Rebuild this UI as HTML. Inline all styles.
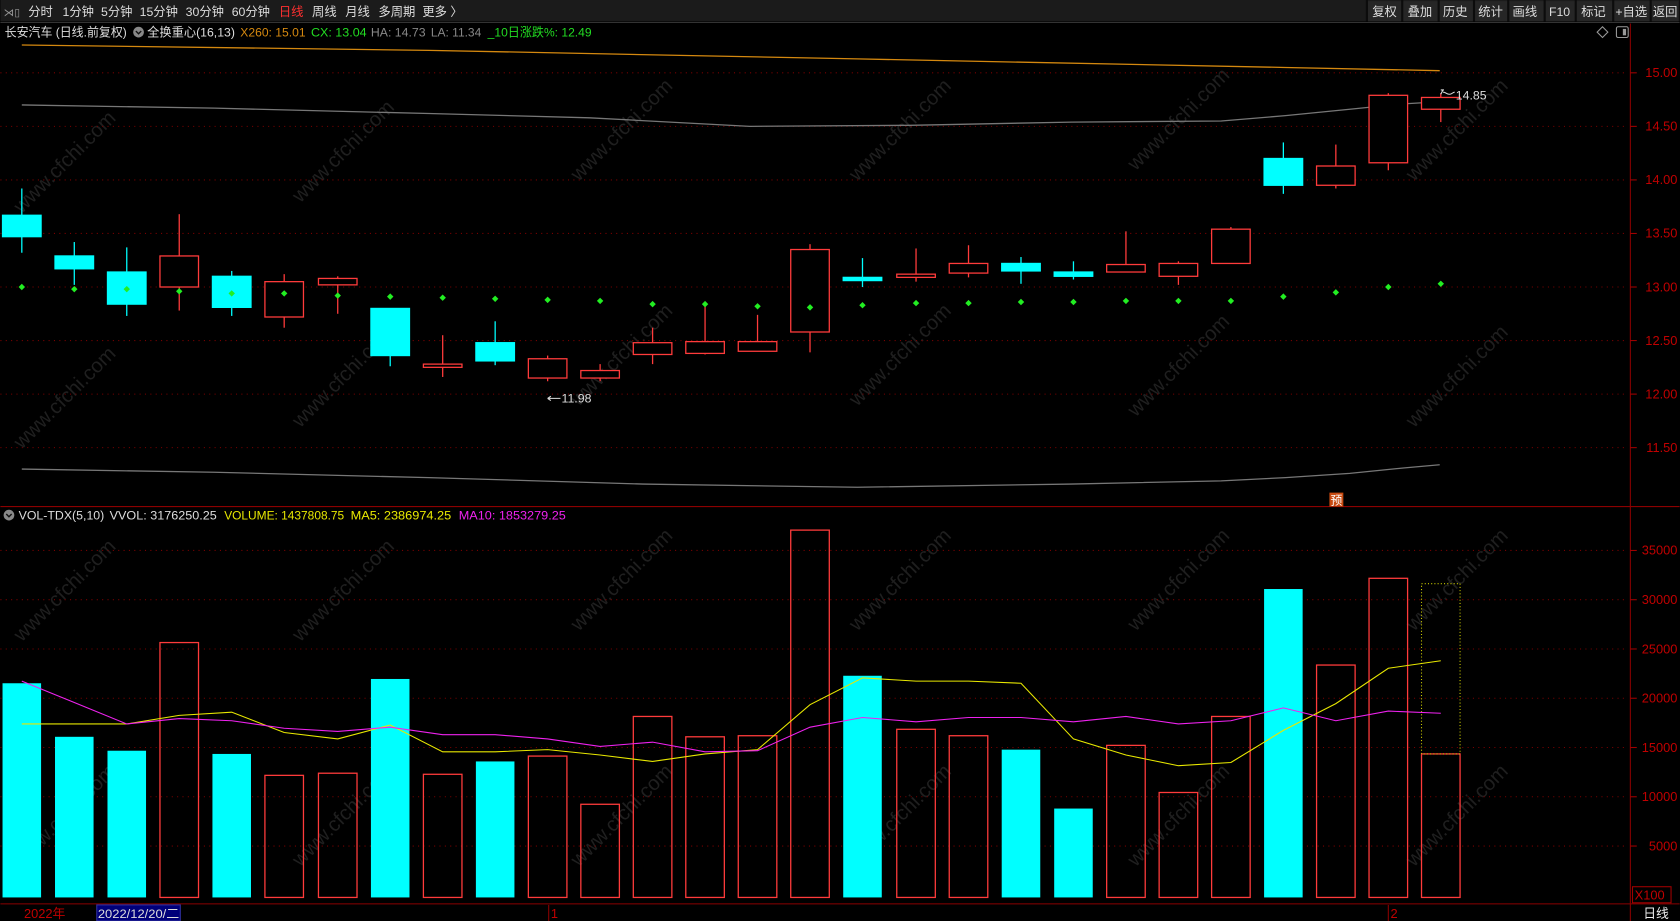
<!DOCTYPE html>
<html><head><meta charset="utf-8"><style>
html,body{margin:0;padding:0;background:#000;overflow:hidden}
svg{display:block}
text{font-family:"Liberation Sans","Noto Sans CJK SC",sans-serif}
</style></head><body>
<svg width="1680" height="921" viewBox="0 0 1568 860" xmlns="http://www.w3.org/2000/svg">
<rect width="1568" height="860" fill="#000"/>
<!-- watermarks -->
<g fill="#1f1f1f" font-size="19" font-family="Liberation Sans,sans-serif">
<text transform="translate(20,200) rotate(-45)">www.cfchi.com</text>
<text transform="translate(280,190) rotate(-45)">www.cfchi.com</text>
<text transform="translate(540,170) rotate(-45)">www.cfchi.com</text>
<text transform="translate(800,170) rotate(-45)">www.cfchi.com</text>
<text transform="translate(1060,160) rotate(-45)">www.cfchi.com</text>
<text transform="translate(1320,170) rotate(-45)">www.cfchi.com</text>
<text transform="translate(20,420) rotate(-45)">www.cfchi.com</text>
<text transform="translate(280,400) rotate(-45)">www.cfchi.com</text>
<text transform="translate(540,380) rotate(-45)">www.cfchi.com</text>
<text transform="translate(800,380) rotate(-45)">www.cfchi.com</text>
<text transform="translate(1060,390) rotate(-45)">www.cfchi.com</text>
<text transform="translate(1320,400) rotate(-45)">www.cfchi.com</text>
<text transform="translate(20,600) rotate(-45)">www.cfchi.com</text>
<text transform="translate(280,600) rotate(-45)">www.cfchi.com</text>
<text transform="translate(540,590) rotate(-45)">www.cfchi.com</text>
<text transform="translate(800,590) rotate(-45)">www.cfchi.com</text>
<text transform="translate(1060,590) rotate(-45)">www.cfchi.com</text>
<text transform="translate(1320,590) rotate(-45)">www.cfchi.com</text>
<text transform="translate(20,810) rotate(-45)">www.cfchi.com</text>
<text transform="translate(280,810) rotate(-45)">www.cfchi.com</text>
<text transform="translate(540,810) rotate(-45)">www.cfchi.com</text>
<text transform="translate(800,810) rotate(-45)">www.cfchi.com</text>
<text transform="translate(1060,810) rotate(-45)">www.cfchi.com</text>
<text transform="translate(1320,810) rotate(-45)">www.cfchi.com</text>
</g>
<!-- top bar -->
<rect x="0" y="0" width="1568" height="20" fill="#1b1b1b"/>
<g font-size="11.5" fill="#ddd">
<text x="3" y="15" fill="#999" font-size="10">⋊▯</text>
<text x="26" y="15">分时</text><text x="58" y="15">1分钟</text><text x="94" y="15">5分钟</text>
<text x="130" y="15">15分钟</text><text x="173" y="15">30分钟</text><text x="216" y="15">60分钟</text>
<text x="260" y="15" fill="#ff3030">日线</text><text x="291" y="15">周线</text><text x="322" y="15">月线</text>
<text x="353" y="15">多周期</text><text x="394" y="15">更多 〉</text>
</g>
<g font-size="11.5" fill="#ddd">
<rect x="1277" y="1" width="290" height="19" fill="#262626"/>
<g stroke="#0c0c0c" stroke-width="2"><line x1="1276" y1="0" x2="1276" y2="20"/><line x1="1309" y1="0" x2="1309" y2="20"/><line x1="1343" y1="0" x2="1343" y2="20"/><line x1="1376" y1="0" x2="1376" y2="20"/><line x1="1408" y1="0" x2="1408" y2="20"/><line x1="1442" y1="0" x2="1442" y2="20"/><line x1="1471" y1="0" x2="1471" y2="20"/><line x1="1506" y1="0" x2="1506" y2="20"/><line x1="1541" y1="0" x2="1541" y2="20"/></g>
<text x="1281" y="15">复权</text><text x="1314" y="15">叠加</text><text x="1347" y="15">历史</text><text x="1380" y="15">统计</text><text x="1412" y="15">画线</text><text x="1446" y="15">F10</text><text x="1476" y="15">标记</text><text x="1508" y="15">+自选</text><text x="1543" y="15">返回</text>
</g>
<line x1="0" y1="21" x2="1568" y2="21" stroke="#333"/>
<!-- info line -->
<g font-size="11.5">
<text x="4" y="34" fill="#ddd" textLength="114" lengthAdjust="spacingAndGlyphs">长安汽车 (日线.前复权)</text>
<circle cx="129" cy="30" r="5" fill="#888"/><path d="M126.5 29l2.5 2.5 2.5-2.5" stroke="#111" stroke-width="1.3" fill="none"/>
<text x="137" y="34" fill="#ddd" textLength="82" lengthAdjust="spacingAndGlyphs">全换重心(16,13)</text>
<text x="224" y="34" fill="#d4880f" textLength="61" lengthAdjust="spacingAndGlyphs">X260: 15.01</text>
<text x="290" y="34" fill="#22dd22" textLength="52" lengthAdjust="spacingAndGlyphs">CX: 13.04</text>
<text x="346" y="34" fill="#888" textLength="51" lengthAdjust="spacingAndGlyphs">HA: 14.73</text>
<text x="402" y="34" fill="#888" textLength="47" lengthAdjust="spacingAndGlyphs">LA: 11.34</text>
<text x="455" y="34" fill="#22dd22" textLength="97" lengthAdjust="spacingAndGlyphs">_10日涨跌%: 12.49</text>
</g>
<path d="M1496 25l5 5-5 5-5-5z" stroke="#999" fill="none"/>
<rect x="1509" y="25" width="11" height="10" rx="1.5" stroke="#999" fill="none"/><rect x="1515" y="27" width="3" height="6" fill="#999"/>
<!-- axes -->
<line x1="1522" y1="22" x2="1522" y2="860" stroke="#8b0000"/>
<line x1="0" y1="473" x2="1568" y2="473" stroke="#8b0000"/>
<line x1="0" y1="844" x2="1568" y2="844" stroke="#8b0000"/>
<!-- price grid -->
<g stroke="#7a0000" stroke-dasharray="1 4">
<line x1="0" y1="68" x2="1520" y2="68"/><line x1="0" y1="118" x2="1520" y2="118"/><line x1="0" y1="168" x2="1520" y2="168"/><line x1="0" y1="218" x2="1520" y2="218"/><line x1="0" y1="268" x2="1520" y2="268"/><line x1="0" y1="318" x2="1520" y2="318"/><line x1="0" y1="368" x2="1520" y2="368"/><line x1="0" y1="418" x2="1520" y2="418"/>
<line x1="0" y1="514" x2="1520" y2="514"/><line x1="0" y1="560" x2="1520" y2="560"/><line x1="0" y1="606" x2="1520" y2="606"/><line x1="0" y1="652" x2="1520" y2="652"/><line x1="0" y1="698" x2="1520" y2="698"/><line x1="0" y1="744" x2="1520" y2="744"/><line x1="0" y1="790" x2="1520" y2="790"/>
</g>
<g stroke="#a00000">
<line x1="1522" y1="68" x2="1528" y2="68"/><line x1="1522" y1="118" x2="1528" y2="118"/><line x1="1522" y1="168" x2="1528" y2="168"/><line x1="1522" y1="218" x2="1528" y2="218"/><line x1="1522" y1="268" x2="1528" y2="268"/><line x1="1522" y1="318" x2="1528" y2="318"/><line x1="1522" y1="368" x2="1528" y2="368"/><line x1="1522" y1="418" x2="1528" y2="418"/>
<line x1="1522" y1="514" x2="1528" y2="514"/><line x1="1522" y1="560" x2="1528" y2="560"/><line x1="1522" y1="606" x2="1528" y2="606"/><line x1="1522" y1="652" x2="1528" y2="652"/><line x1="1522" y1="698" x2="1528" y2="698"/><line x1="1522" y1="744" x2="1528" y2="744"/><line x1="1522" y1="790" x2="1528" y2="790"/>
</g>
<g font-size="12" fill="#c00000" text-anchor="end">
<text x="1566" y="72">15.00</text><text x="1566" y="122">14.50</text><text x="1566" y="172">14.00</text><text x="1566" y="222">13.50</text><text x="1566" y="272">13.00</text><text x="1566" y="322">12.50</text><text x="1566" y="372">12.00</text><text x="1566" y="422">11.50</text>
<text x="1566" y="518">35000</text><text x="1566" y="564">30000</text><text x="1566" y="610">25000</text><text x="1566" y="656">20000</text><text x="1566" y="702">15000</text><text x="1566" y="748">10000</text><text x="1566" y="794">5000</text>
</g>
<!-- lines -->
<polyline fill="none" stroke="#d4880f" stroke-width="1.2" points="20,42 400,47 800,55 1200,63 1344,66"/>
<polyline fill="none" stroke="#777" stroke-width="1.2" points="20,98 200,101 400,106 550,110 700,118 850,117 1000,114 1140,113 1200,108 1260,102 1310,97 1344,95"/>
<polyline fill="none" stroke="#777" stroke-width="1.2" points="20,438 200,441 400,446 600,452 800,455 1000,452 1140,449 1200,446 1260,442 1310,437 1344,434"/>
<!-- candles -->
<g stroke-width="1.2">
<g stroke="#00ffff" fill="#00ffff">
<line x1="20" y1="176" x2="20" y2="236"/><rect x="2" y="201" width="36" height="20"/>
<line x1="69" y1="226" x2="69" y2="266"/><rect x="51" y="239" width="36" height="12"/>
<line x1="118" y1="231" x2="118" y2="295"/><rect x="100" y="254" width="36" height="30"/>
<line x1="216" y1="253" x2="216" y2="295"/><rect x="198" y="258" width="36" height="29"/>
<line x1="364" y1="288" x2="364" y2="342"/><rect x="346" y="288" width="36" height="44"/>
<line x1="462" y1="300" x2="462" y2="341"/><rect x="444" y="320" width="36" height="17"/>
<line x1="805" y1="241" x2="805" y2="268"/><rect x="787" y="259" width="36" height="3"/>
<line x1="953" y1="240" x2="953" y2="265"/><rect x="935" y="246" width="36" height="7"/>
<line x1="1002" y1="244" x2="1002" y2="261"/><rect x="984" y="254" width="36" height="4"/>
<line x1="1198" y1="133" x2="1198" y2="181"/><rect x="1180" y="148" width="36" height="25"/>
</g>
<g stroke="#ff3b3b" fill="#000">
<line x1="167" y1="200" x2="167" y2="290"/><rect x="149" y="239" width="36" height="29"/>
<line x1="265" y1="256" x2="265" y2="306"/><rect x="247" y="263" width="36" height="33"/>
<line x1="315" y1="258" x2="315" y2="293"/><rect x="297" y="260" width="36" height="6"/>
<line x1="413" y1="313" x2="413" y2="352"/><rect x="395" y="340" width="36" height="3"/>
<line x1="511" y1="332" x2="511" y2="356"/><rect x="493" y="335" width="36" height="18"/>
<line x1="560" y1="340" x2="560" y2="356"/><rect x="542" y="346" width="36" height="7"/>
<line x1="609" y1="306" x2="609" y2="340"/><rect x="591" y="320" width="36" height="11"/>
<line x1="658" y1="284" x2="658" y2="331"/><rect x="640" y="319" width="36" height="11"/>
<line x1="707" y1="294" x2="707" y2="328"/><rect x="689" y="319" width="36" height="9"/>
<line x1="756" y1="228" x2="756" y2="329"/><rect x="738" y="233" width="36" height="77"/>
<line x1="855" y1="232" x2="855" y2="263"/><rect x="837" y="256" width="36" height="3"/>
<line x1="904" y1="229" x2="904" y2="259"/><rect x="886" y="246" width="36" height="9"/>
<line x1="1051" y1="216" x2="1051" y2="254"/><rect x="1033" y="247" width="36" height="7"/>
<line x1="1100" y1="244" x2="1100" y2="266"/><rect x="1082" y="246" width="36" height="12"/>
<line x1="1149" y1="212" x2="1149" y2="246"/><rect x="1131" y="214" width="36" height="32"/>
<line x1="1247" y1="135" x2="1247" y2="176"/><rect x="1229" y="155" width="36" height="18"/>
<line x1="1296" y1="87" x2="1296" y2="159"/><rect x="1278" y="89" width="36" height="63"/>
<line x1="1345" y1="87" x2="1345" y2="114"/><rect x="1327" y="91" width="36" height="11"/>
</g>
</g>
<!-- green dots -->
<g fill="#22ee22">
<path d="M20 265l3 3-3 3-3-3z"/><path d="M69 267l3 3-3 3-3-3z"/><path d="M118 267l3 3-3 3-3-3z"/><path d="M167 269l3 3-3 3-3-3z"/><path d="M216 271l3 3-3 3-3-3z"/><path d="M265 271l3 3-3 3-3-3z"/><path d="M315 273l3 3-3 3-3-3z"/><path d="M364 274l3 3-3 3-3-3z"/><path d="M413 275l3 3-3 3-3-3z"/><path d="M462 276l3 3-3 3-3-3z"/><path d="M511 277l3 3-3 3-3-3z"/><path d="M560 278l3 3-3 3-3-3z"/><path d="M609 281l3 3-3 3-3-3z"/><path d="M658 281l3 3-3 3-3-3z"/><path d="M707 283l3 3-3 3-3-3z"/><path d="M756 284l3 3-3 3-3-3z"/><path d="M805 282l3 3-3 3-3-3z"/><path d="M855 280l3 3-3 3-3-3z"/><path d="M904 280l3 3-3 3-3-3z"/><path d="M953 279l3 3-3 3-3-3z"/><path d="M1002 279l3 3-3 3-3-3z"/><path d="M1051 278l3 3-3 3-3-3z"/><path d="M1100 278l3 3-3 3-3-3z"/><path d="M1149 278l3 3-3 3-3-3z"/><path d="M1198 274l3 3-3 3-3-3z"/><path d="M1247 270l3 3-3 3-3-3z"/><path d="M1296 265l3 3-3 3-3-3z"/><path d="M1345 262l3 3-3 3-3-3z"/>
</g>
<g stroke="#ddd" fill="none"><path d="M511 372h12M511 372l3-2M511 372l3 2"/></g>
<text x="524" y="376" font-size="11.5" fill="#ddd">11.98</text>
<path d="M1345 88l2-4M1345 84h3M1347 86c3 0 3 2 6 2s3-2 5-2" stroke="#ddd" fill="none"/>
<text x="1359" y="93" font-size="11.5" fill="#ddd">14.85</text>
<rect x="1241" y="460" width="13" height="13" fill="#c84a10"/><text x="1242" y="471" font-size="11" fill="#fff">预</text>
<!-- VOL header -->
<g font-size="11.5">
<circle cx="8" cy="481" r="5" fill="#888"/><path d="M5.5 480l2.5 2.5 2.5-2.5" stroke="#111" stroke-width="1.3" fill="none"/>
<text x="17" y="485" fill="#ddd" textLength="80" lengthAdjust="spacingAndGlyphs">VOL-TDX(5,10)</text>
<text x="102" y="485" fill="#ddd" textLength="100" lengthAdjust="spacingAndGlyphs">VVOL: 3176250.25</text>
<text x="209" y="485" fill="#e8e800" textLength="112" lengthAdjust="spacingAndGlyphs">VOLUME: 1437808.75</text>
<text x="327" y="485" fill="#e8e800" textLength="94" lengthAdjust="spacingAndGlyphs">MA5: 2386974.25</text>
<text x="428" y="485" fill="#ee22ee" textLength="100" lengthAdjust="spacingAndGlyphs">MA10: 1853279.25</text>
</g>
<!-- volume bars -->
<g fill="#00ffff">
<rect x="2" y="638" width="36" height="200"/><rect x="51" y="688" width="36" height="150"/><rect x="100" y="701" width="36" height="137"/><rect x="198" y="704" width="36" height="134"/><rect x="346" y="634" width="36" height="204"/><rect x="444" y="711" width="36" height="127"/><rect x="787" y="631" width="36" height="207"/><rect x="935" y="700" width="36" height="138"/><rect x="984" y="755" width="36" height="83"/><rect x="1180" y="550" width="36" height="288"/>
</g>
<g fill="none" stroke="#ff3b3b" stroke-width="1.2">
<rect x="149" y="600" width="36" height="238"/><rect x="247" y="724" width="36" height="114"/><rect x="297" y="722" width="36" height="116"/><rect x="395" y="723" width="36" height="115"/><rect x="493" y="706" width="36" height="132"/><rect x="542" y="751" width="36" height="87"/><rect x="591" y="669" width="36" height="169"/><rect x="640" y="688" width="36" height="150"/><rect x="689" y="687" width="36" height="151"/><rect x="738" y="495" width="36" height="343"/><rect x="837" y="681" width="36" height="157"/><rect x="886" y="687" width="36" height="151"/><rect x="1033" y="696" width="36" height="142"/><rect x="1082" y="740" width="36" height="98"/><rect x="1131" y="669" width="36" height="169"/><rect x="1229" y="621" width="36" height="217"/><rect x="1278" y="540" width="36" height="298"/><rect x="1327" y="704" width="36" height="134"/>
</g>
<rect x="1327" y="545" width="36" height="159" fill="none" stroke="#c8c800" stroke-dasharray="1 2"/>
<polyline fill="none" stroke="#e8e800" stroke-width="1" points="20,676 69,676 118,676 167,668 216,665 265,684 315,690 364,677 413,702 462,702 511,700 560,705 609,711 658,704 707,700 756,658 805,633 855,636 904,636 953,638 1002,690 1051,705 1100,715 1149,712 1198,682 1247,657 1296,624 1345,617"/>
<polyline fill="none" stroke="#ee22ee" stroke-width="1" points="20,636 69,656 118,676 167,671 216,673 265,680 315,683 364,679 413,686 462,686 511,690 560,697 609,693 658,702 707,701 756,679 805,670 855,674 904,670 953,670 1002,674 1051,669 1100,676 1149,673 1198,661 1247,673 1296,664 1345,666"/>
<!-- bottom -->
<rect x="1524" y="828" width="36" height="15" fill="none" stroke="#a00000"/>
<text x="1526" y="840" font-size="12" fill="#c00000">X100</text>
<text x="22" y="857" font-size="12" fill="#c00000">2022年</text>
<rect x="90" y="845" width="78" height="15" fill="#00007a" stroke="#3030a0"/>
<text x="91" y="857" font-size="11.5" fill="#ddd" textLength="76" lengthAdjust="spacingAndGlyphs">2022/12/20/二</text>
<line x1="512" y1="845" x2="512" y2="860" stroke="#8b0000"/><text x="514" y="857" font-size="12" fill="#c00000">1</text>
<line x1="1296" y1="845" x2="1296" y2="860" stroke="#8b0000"/><text x="1298" y="857" font-size="12" fill="#c00000">2</text>
<text x="1534" y="857" font-size="12" fill="#eee">日线</text>
</svg>
</body></html>
